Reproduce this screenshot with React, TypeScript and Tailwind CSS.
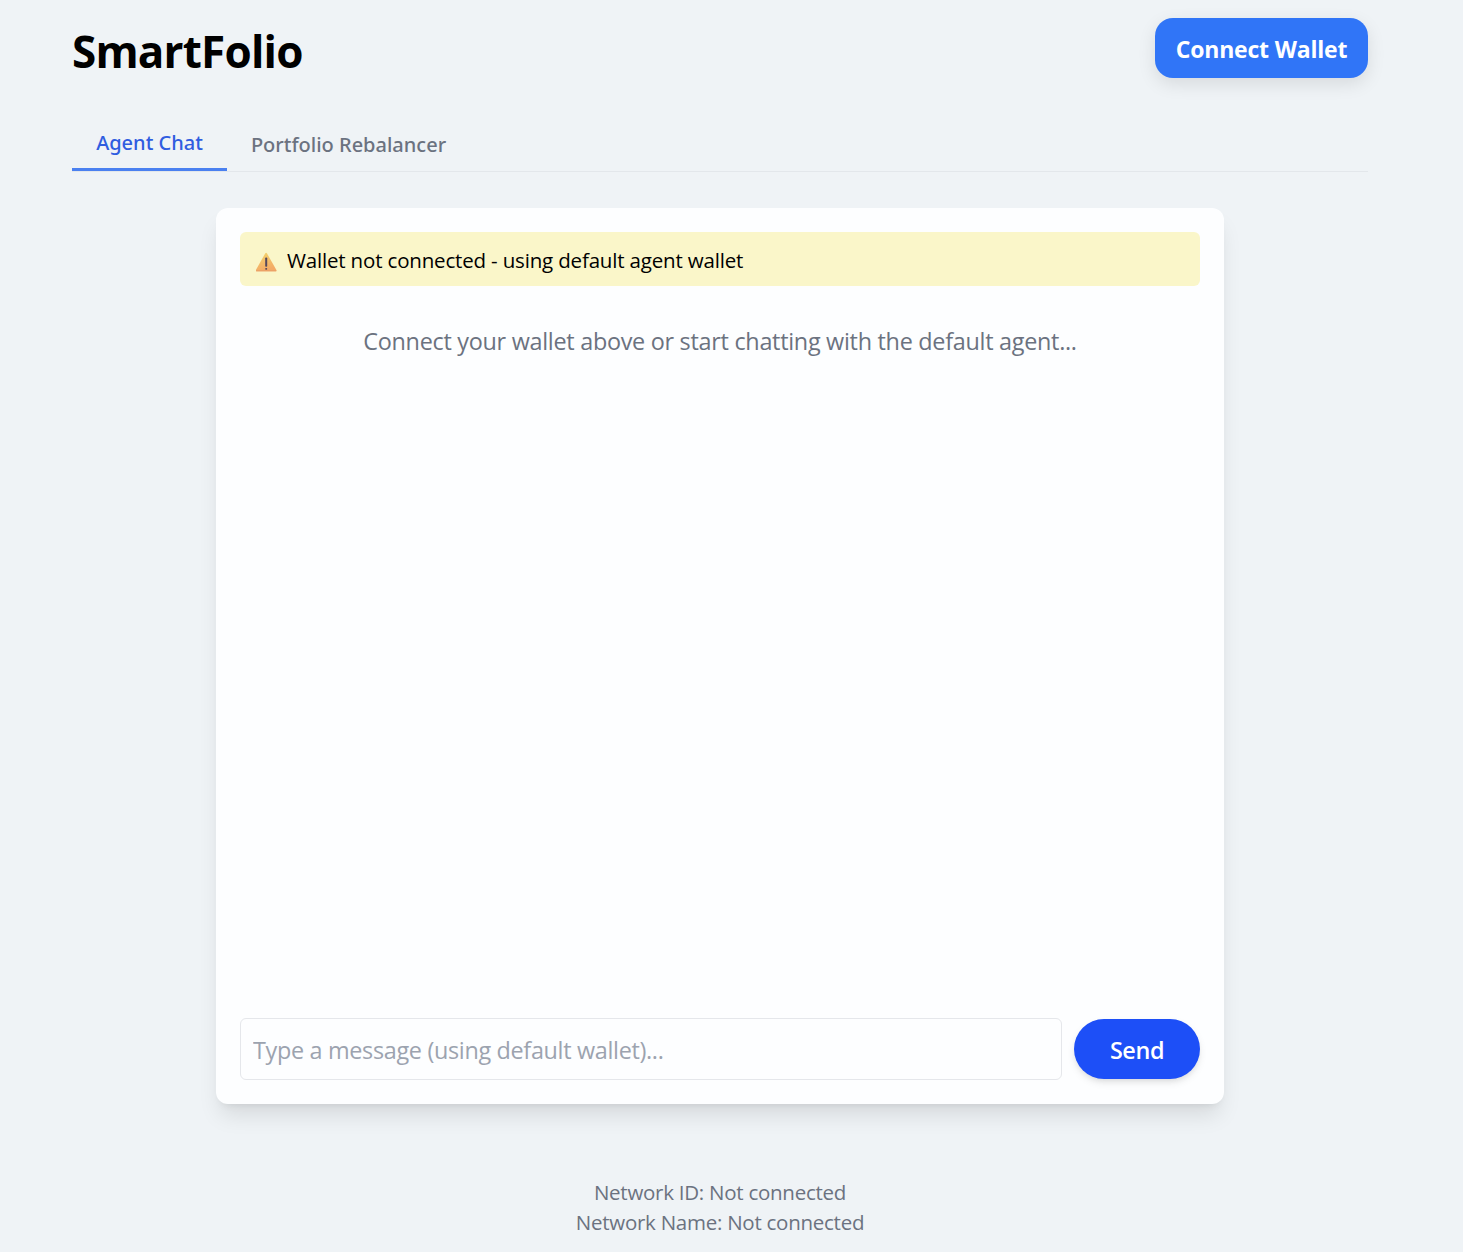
function WarningIcon() {
  return (
    <svg className="mt-[5px] h-[20px] w-[22px] shrink-0" viewBox="0.5 0 22 20" aria-hidden="true">
      <defs>
        <linearGradient id="warning" x1="0" y1="0" x2="0.3" y2="1">
          <stop offset="0" stopColor="#f3d56c" />
          <stop offset="1" stopColor="#f3aa66" />
        </linearGradient>
      </defs>
      <path d="M9.8 1.3Q10.6 0 11.4 1.3L20.9 18Q21.5 19.3 20.2 19.3H1Q-.2 19.3.4 18Z" fill="url(#warning)" />
      <path d="M.7 18.8H20.6" stroke="#e99f68" strokeWidth="1" />
      <rect x="9.7" y="5.5" width="2" height="9.3" rx="0.8" fill="#54485c" />
      <rect x="9.7" y="16" width="2" height="1.7" rx="0.7" fill="#54485c" />
    </svg>
  );
}

export default function App() {
  return (
    <div className="flex h-[1252px] w-full flex-col bg-[#eff3f6] pl-[72px] pr-[95px] font-['Open_Sans',sans-serif] text-black">
      <header className="flex h-[78px] shrink-0 items-start justify-between pt-[18px]">
        <h1 className="mt-[3px] text-[44px] font-bold leading-[60px] tracking-[-0.8px]">
          <span className="inline-block">SmartFolio</span>
        </h1>
        <button className="h-[60px] w-[213px] rounded-[18px] bg-[#3075f7] text-[23px] font-bold tracking-[-0.2px] text-white shadow-[0_6px_18px_rgba(0,0,0,0.1)]">
          <span className="relative top-[1px] whitespace-nowrap">Connect Wallet</span>
        </button>
      </header>
      <nav className="mt-[39px] flex h-[55px] shrink-0 border-b border-[#e3e7eb] font-['Noto_Sans',sans-serif] text-[20px] font-medium leading-[30px]">
        <button className="h-[54px] w-[155px] border-b-[3px] border-[#4a80f0] pt-[1px] text-[#2f5de0]">Agent Chat</button>
        <button className="h-[54px] w-[243px] pt-[2px] text-[#6b7280]">Portfolio Rebalancer</button>
      </nav>
      <main className="ml-[144px] mt-[36px] flex h-[896px] w-[1008px] shrink-0 flex-col rounded-[12px] bg-[#fdfeff] p-6 shadow-[0_15px_22.5px_-4.5px_rgba(0,0,0,0.1),0_6px_9px_-6px_rgba(0,0,0,0.1)]">
        <div className="flex h-[54px] shrink-0 items-center rounded-[6px] bg-[#faf6c9] pl-4 text-[20.5px] leading-[30px] tracking-[-0.17px]">
          <WarningIcon />
          <span className="ml-[9px] mt-[1px]">Wallet not connected - using default agent wallet</span>
        </div>
        <p className="mt-[37px] text-center text-[23.4px] leading-9 tracking-[-0.28px] text-[#6b7280]">Connect your wallet above or start chatting with the default agent...</p>
        <div className="mt-auto flex h-[62px] items-center gap-3">
          <input className="h-[62px] w-[822px] rounded-[6px] border border-[#e5e7eb] px-3 pt-[2px] text-[23.4px] tracking-[-0.32px] placeholder:text-[#9ca3af]" placeholder="Type a message (using default wallet)..." />
          <button className="h-[60px] w-[126px] rounded-full bg-[#1d4ff7] pt-[3px] text-[23.4px] font-semibold tracking-[-0.4px] text-white shadow-[0_4px_9px_-1px_rgba(0,0,0,0.1),0_3px_6px_-3px_rgba(0,0,0,0.1)]">Send</button>
        </div>
      </main>
      <footer className="mt-[73px] w-[1296px] text-center text-[20.5px] leading-[30px] tracking-[-0.26px] text-[#6b7280]">
        <p>Network ID: Not connected</p>
        <p>Network Name: Not connected</p>
      </footer>
    </div>
  );
}
